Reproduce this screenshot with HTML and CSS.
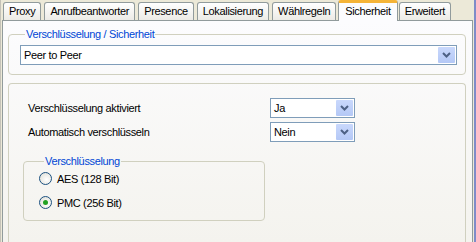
FILE: index.html
```html
<!DOCTYPE html>
<html>
<head>
<meta charset="utf-8">
<link rel="stylesheet" href="styles.css">
</head>
<body>
<div class="window">
  <div class="tabs">
    <div class="tab">Proxy</div>
    <div class="tab">Anrufbeantworter</div>
    <div class="tab">Presence</div>
    <div class="tab">Lokalisierung</div>
    <div class="tab">Wählregeln</div>
    <div class="tab active">Sicherheit</div>
    <div class="tab">Erweitert</div>
  </div>
  <div class="panel">
    <fieldset class="group g1">
      <legend>Verschlüsselung / Sicherheit</legend>
      <div class="combo wide"><span class="val">Peer to Peer</span><span class="btn"><svg width="9" height="6" viewBox="0 0 9 6"><path d="M1 1 L4.5 4.5 L8 1" fill="none" stroke="#4D6185" stroke-width="2"/></svg></span></div>
    </fieldset>
    <fieldset class="group g2">
      <div class="row"><span class="lbl">Verschlüsselung aktiviert</span><div class="combo small"><span class="val">Ja</span><span class="btn"><svg width="9" height="6" viewBox="0 0 9 6"><path d="M1 1 L4.5 4.5 L8 1" fill="none" stroke="#4D6185" stroke-width="2"/></svg></span></div></div>
      <div class="row"><span class="lbl">Automatisch verschlüsseln</span><div class="combo small"><span class="val">Nein</span><span class="btn"><svg width="9" height="6" viewBox="0 0 9 6"><path d="M1 1 L4.5 4.5 L8 1" fill="none" stroke="#4D6185" stroke-width="2"/></svg></span></div></div>
      <fieldset class="group g3">
        <legend>Verschlüsselung</legend>
        <div class="radio"><span class="circle"></span><span>AES (128 Bit)</span></div>
        <div class="radio"><span class="circle on"><span class="dot"></span></span><span>PMC (256 Bit)</span></div>
      </fieldset>
    </fieldset>
  </div>
</div>
</body>
</html>
```
FILE: styles.css
```css
* { box-sizing: border-box; }
html, body { margin: 0; padding: 0; }
body {
  width: 476px; height: 242px; overflow: hidden;
  font-family: "Liberation Sans", Arial, sans-serif;
  font-size: 11px; letter-spacing: -0.35px; color: #000;
}
.window {
  width: 476px; height: 242px;
  background: #ECE9D8;
  border-left: 1px solid #C4C2B8;
  border-right: 2px solid #7F8CC8;
  padding-left: 1px;
  display: flex; flex-direction: column;
}
.tabs {
  display: flex; align-items: flex-end; gap: 3px;
  height: 20px; padding-left: 1px; position: relative; z-index: 1;
}
.tab {
  height: 18px; padding: 0 5px;
  border: 1px solid #919B9C; border-bottom: none;
  border-radius: 3px 3px 0 0;
  background: linear-gradient(#FFFFFF, #ECEBE6);
  font-size: 11px; letter-spacing: -0.35px; line-height: 17px;
}
.tab.active {
  height: 21px; margin: 0 -2px -1px -1px; padding: 0 6px;
  background: #FCFCFE;
  border-top: 3px solid #F5B437;
  line-height: 17px; position: relative;
}
.panel {
  flex: 1; margin-right: 1px;
  border: 1px solid #919B9C; border-bottom: none;
  background: linear-gradient(#FCFCFE, #F4F3EE);
  padding: 7px 6px 0 5px;
  display: flex; flex-direction: column; gap: 4px;
}
.group {
  margin: 0; border: 1px solid #D0D0BF; border-radius: 4px;
  padding: 0; min-width: 0;
}
.group legend {
  color: #0046D5; padding: 0 1px; margin-left: 5px; font-size: 11px;
}
.g1 { padding: 5px 8px 9px 11px; }
.g2 { flex: 1; border-bottom: none; border-radius: 4px 4px 0 0; padding: 12px 0 0 19px; margin-top: 4px; }
.combo {
  display: flex; height: 20px; border: 1px solid #7F9DB9; background: #fff;
  padding: 1px;
}
.combo .val { flex: 1; padding-left: 2px; line-height: 17px; }
.combo .btn {
  width: 17px; height: 16px;
  background: linear-gradient(#C9D8FC, #B4C8F6);
  border-radius: 1px;
  display: flex; align-items: center; justify-content: center;
}
.combo.small { width: 85px; }
.row { display: flex; align-items: center; height: 24px; }
.row .lbl { width: 242px; }
.g3 {
  width: 242px; margin: 11px 0 0 -5px; padding: 5px 0 11px 15px;
  display: flex; flex-direction: column; gap: 11px;
}
.radio { display: flex; align-items: center; gap: 5px; height: 13px; }
.circle {
  width: 13px; height: 13px; border-radius: 50%;
  border: 1px solid #1C5180;
  background: radial-gradient(circle at 60% 60%, #FFFFFF, #DCDCD3);
  display: flex; align-items: center; justify-content: center;
}
.dot { width: 5px; height: 5px; border-radius: 50%; background: #21A121; }
```
